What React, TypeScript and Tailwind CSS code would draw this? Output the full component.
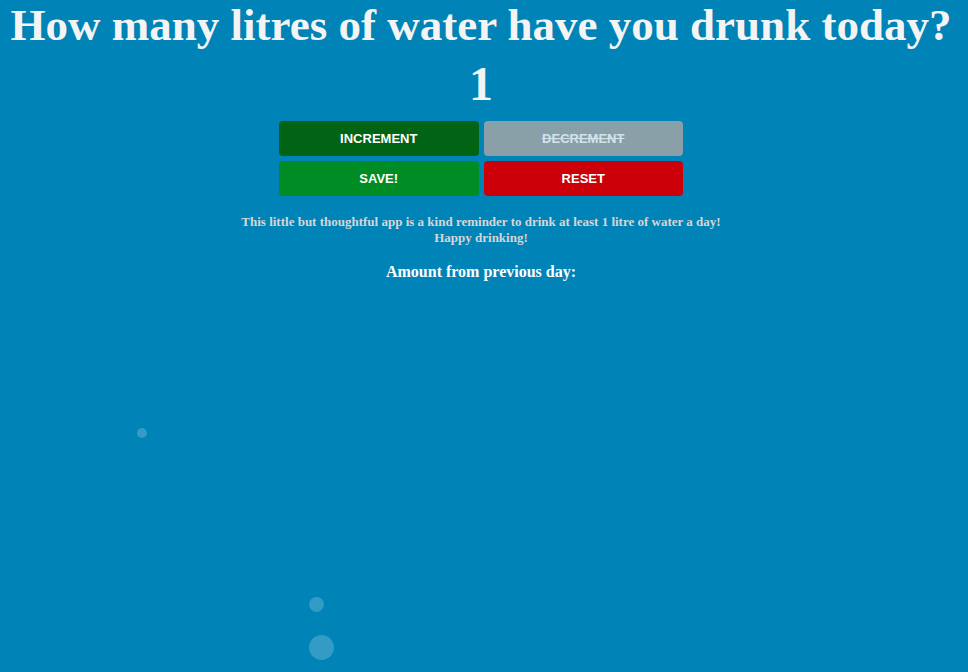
export default function App() {
  const bubbles = [
    { x: 142, y: 433, r: 5 },
    { x: 316, y: 604, r: 7.5 },
    { x: 321, y: 647, r: 12.5 },
  ];

  return (
    <div className="relative h-[672px] w-full overflow-hidden bg-[#0083b6] pr-[6px] text-center font-['Liberation_Serif',serif]">
      {bubbles.map((b, i) => (
        <span
          key={i}
          className="absolute rounded-full bg-white/20"
          style={{ left: b.x - b.r, top: b.y - b.r, width: b.r * 2, height: b.r * 2 }}
        />
      ))}

      <h1 className="pt-[2px] text-[45px] font-bold leading-[46px] text-[#f4f4f4]">
        How many litres of water have you drunk today?
      </h1>
      <div className="mt-[12px] text-[48px] font-bold leading-[48px] text-[#f4f4f4]">1</div>

      <div className="mx-auto mt-[13px] grid w-[404px] grid-cols-2 gap-[5px] font-['Liberation_Sans',Arial,sans-serif] text-[13px] font-bold">
        <button className="h-[35px] rounded-[4px] bg-[#006414] uppercase text-white">Increment</button>
        <button className="h-[35px] rounded-[4px] bg-[#8aa0a8] uppercase text-[#d2e2ea] line-through">Decrement</button>
        <button className="h-[35px] rounded-[4px] bg-[#008c24] uppercase text-white">Save!</button>
        <button className="h-[35px] rounded-[4px] bg-[#cc0008] uppercase text-white">Reset</button>
      </div>

      <p className="mt-[18px] text-[13px] font-bold leading-[16px] text-[#d6d6d6]">
        This little but thoughtful app is a kind reminder to drink at least 1 litre of water a day!
        <br />
        Happy drinking!
      </p>

      <h3 className="mt-[14px] text-[16px] font-bold text-white">Amount from previous day:</h3>
    </div>
  );
}
